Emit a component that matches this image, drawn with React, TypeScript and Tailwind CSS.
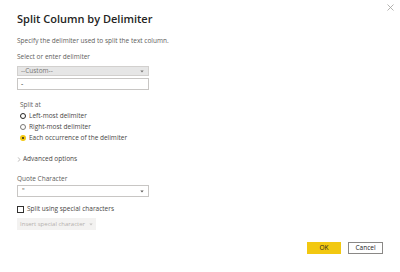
import React from 'react';

const Caret: React.FC<{ className?: string }> = ({ className }) => (
  <svg viewBox="0 0 6 4" className={className} fill="currentColor">
    <path d="M0.5 0.5h5L3 3.5z" />
  </svg>
);

const Radio: React.FC<{ state: 'focus' | 'off' | 'on' }> = ({ state }) => {
  if (state === 'on') {
    return (
      <span className="w-[6px] h-[6px] rounded-full bg-[#f2c811] flex items-center justify-center">
        <span className="w-[2px] h-[2px] rounded-full bg-[#252423]" />
      </span>
    );
  }
  return (
    <span
      className={
        state === 'focus'
          ? 'w-[6px] h-[6px] rounded-full border-[1.5px] border-[#252423]'
          : 'w-[6px] h-[6px] rounded-full border border-[#797775]'
      }
    />
  );
};

const options: { label: string; state: 'focus' | 'off' | 'on' }[] = [
  { label: 'Left-most delimiter', state: 'focus' },
  { label: 'Right-most delimiter', state: 'off' },
  { label: 'Each occurrence of the delimiter', state: 'on' },
];

export default function App() {
  return (
    <div className="relative w-[400px] h-[272px] bg-white overflow-hidden flex flex-col font-['Open_Sans',sans-serif] text-[#484644]">
      {/* close button */}
      <button className="absolute top-[4px] right-[6px] w-[7px] h-[7px] text-[#a19f9d]" aria-label="Close">
        <svg viewBox="0 0 7 7" className="w-[7px] h-[7px]" stroke="currentColor" strokeWidth="0.8">
          <path d="M0.5 0.5L6.5 6.5M6.5 0.5L0.5 6.5" />
        </svg>
      </button>

      <div className="flex flex-col pl-[17px] pt-[11px]">
        <h1 className="h-[16px] leading-[16px] text-[11px] font-semibold text-[#252423]">Split Column by Delimiter</h1>
        <p className="mt-[8px] h-[12px] leading-[12px] text-[6.5px] text-[#605e5c]">
          Specify the delimiter used to split the text column.
        </p>

        <label className="mt-[4px] h-[12px] leading-[12px] text-[6.5px] text-[#605e5c]">Select or enter delimiter</label>
        <div className="mt-[3px] w-[132px] h-[10px] bg-[#e6e6e6] border border-[#d2d0ce] flex items-center justify-between pl-[3px] pr-[4px] text-[6.5px] text-[#797775]">
          <span>--Custom--</span>
          <Caret className="w-[4px] h-[3px] text-[#797775]" />
        </div>
        <div className="mt-[2px] w-[132px] h-[12px] bg-white border border-[#c8c6c4] flex items-center pl-[3px] text-[7px] text-[#252423]">
          -
        </div>

        <div className="mt-[9px] pl-[3px] flex flex-col">
          <span className="h-[11px] leading-[11px] text-[6.5px] text-[#605e5c]">Split at</span>
          {options.map((o) => (
            <div key={o.label} className="h-[11px] flex items-center gap-[3px]">
              <Radio state={o.state} />
              <span className="text-[6.5px]">{o.label}</span>
            </div>
          ))}
        </div>

        <div className="mt-[10px] h-[12px] flex items-center gap-[2px] text-[6.5px]">
          <svg viewBox="0 0 4 6" className="w-[4px] h-[5px] text-[#8a8886]" fill="none" stroke="currentColor" strokeWidth="0.7">
            <path d="M1 0.5L3 3L1 5.5" />
          </svg>
          <span>Advanced options</span>
        </div>

        <label className="mt-[8px] h-[12px] leading-[12px] text-[6.5px] text-[#605e5c]">Quote Character</label>
        <div className="w-[132px] h-[12px] bg-white border border-[#c8c6c4] flex items-center justify-between pl-[4px] pr-[4px] text-[6.5px] text-[#605e5c]">
          <span>"</span>
          <Caret className="w-[4px] h-[3px] text-[#605e5c]" />
        </div>

        <div className="mt-[6px] h-[12px] flex items-center gap-[3px]">
          <span className="w-[7px] h-[7px] border border-[#323130]" />
          <span className="text-[6.5px]">Split using special characters</span>
        </div>

        <div className="mt-[3px] w-[79px] h-[12px] bg-[#f3f2f1] flex items-center justify-center gap-[4px] text-[6px] text-[#b3b0ad]">
          <span>Insert special character</span>
          <Caret className="w-[4px] h-[3px] text-[#c8c6c4]" />
        </div>
      </div>

      <div className="mt-auto mb-[18px] pr-[17px] flex justify-end gap-[7px]">
        <button className="w-[34px] h-[12px] bg-[#f2c811] text-[6.5px] text-[#252423] flex items-center justify-center">OK</button>
        <button className="w-[35px] h-[12px] bg-white border border-[#8a8886] text-[6.5px] text-[#252423] flex items-center justify-center">
          Cancel
        </button>
      </div>
    </div>
  );
}
